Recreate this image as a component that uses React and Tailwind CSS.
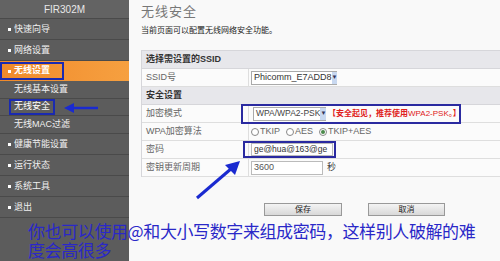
import React from "react";

const F = { fontFamily: '"Liberation Sans", "Noto Sans CJK SC", sans-serif' };

function NavItem({ children, sub }) {
  return (
    <div className={`flex items-center border-b border-[#4a4a4a] ${sub ? "h-[18px] pl-[14px]" : "h-[21px] pl-[8px]"}`}>
      {!sub && <span className="w-[3px] h-[3px] bg-white mr-[3px]" />}
      <span className="text-[9px] text-[#f0f0f0] leading-none whitespace-nowrap">{children}</span>
    </div>
  );
}

function Row({ label, children, header }) {
  if (header)
    return (
      <div className="h-[18px] flex items-center bg-[#e7e7eb] border-b border-[#d6d6da] pl-[4px]">
        <span className="text-[9px] font-bold text-[#333] whitespace-nowrap">{label}</span>
      </div>
    );
  return (
    <div className="h-[18px] flex bg-[#fbfbfb] border-b border-[#dedede]">
      <div className="w-[107px] shrink-0 flex items-center pl-[4px] border-r border-[#dedede]">
        <span className="text-[9px] text-[#666] whitespace-nowrap">{label}</span>
      </div>
      <div className="flex-1 flex items-center pl-[2px] whitespace-nowrap">{children}</div>
    </div>
  );
}

function Radio({ on, label }) {
  return (
    <span className="flex items-center mr-[6px]">
      <span className="w-[8px] h-[8px] rounded-full border border-[#888] bg-white flex items-center justify-center mr-[1px]">
        {on && <span className="w-[4px] h-[4px] rounded-full bg-[#4a8a4a]" />}
      </span>
      <span className="text-[9px] text-[#666]">{label}</span>
    </span>
  );
}

export default function App() {
  return (
    <div className="w-[500px] h-[261px] flex relative overflow-hidden bg-[#f9f9f9]" style={F}>
      {/* Sidebar */}
      <div className="w-[129px] h-full bg-[#5c5c5c] flex flex-col shrink-0">
        <div className="h-[19px] flex items-center justify-center border-b border-[#4a4a4a] bg-[#636363]">
          <span className="text-[10px] text-[#e8e8e8]">FIR302M</span>
        </div>
        <NavItem>快速向导</NavItem>
        <NavItem>网络设置</NavItem>
        <div className="h-[20px] flex items-center bg-gradient-to-r from-[#f08a2a] to-[#f6a040] relative">
          <div className="absolute left-0 top-[1px] w-[64px] h-[18px] border-[2px] border-[#1a2ab0]" />
          <span className="w-[3px] h-[3px] bg-white ml-[8px] mr-[3px]" />
          <span className="text-[9px] text-white font-bold">无线设置</span>
        </div>
        <NavItem sub>无线基本设置</NavItem>
        <div className="h-[17px] flex items-center pl-[9px] border-b border-[#4a4a4a] relative">
          <div className="border-[2px] border-[#1a2ab0] px-[3px] h-[16px] flex items-center">
            <span className="text-[9px] text-white">无线安全</span>
          </div>
          <svg className="absolute left-[64px] top-[3px]" width="36" height="12" viewBox="0 0 36 12">
            <line x1="8" y1="6" x2="34" y2="6" stroke="#1a2ad0" strokeWidth="2.5" />
            <polygon points="0,6 10,1 10,11" fill="#1a2ad0" />
          </svg>
        </div>
        <NavItem sub>无线MAC过滤</NavItem>
        <NavItem>健康节能设置</NavItem>
        <NavItem>运行状态</NavItem>
        <NavItem>系统工具</NavItem>
        <NavItem>退出</NavItem>
      </div>

      {/* Main */}
      <div className="flex-1 pl-[12px] flex flex-col">
        <div className="h-[24px] flex items-center">
          <span className="text-[13px] text-[#777] tracking-[1px]">无线安全</span>
        </div>
        <div className="h-[14px] flex items-center">
          <span className="text-[8px] text-[#222] whitespace-nowrap">当前页面可以配置无线网络安全功能。</span>
        </div>
        <div className="h-[12px]" />
        <div className="border-l border-t border-[#d6d6da]">
          <Row header label="选择需设置的SSID" />
          <Row label="SSID号">
            <div className="h-[14px] w-[86px] shrink-0 border border-[#aaa] bg-white flex items-center justify-between pl-[2px]">
              <span className="text-[9px] text-[#333]">Phicomm_E7ADD8</span>
              <span className="w-[8px] h-[12px] bg-[#c8d8f0] flex items-center justify-center text-[6px] text-[#335]">▼</span>
            </div>
          </Row>
          <Row header label="安全设置" />
          <Row label="加密模式">
            <div className="relative flex items-center -ml-[10px] h-[20px] border-[2px] border-[#2a2aa0] pl-[10px] pr-[2px] w-[220px] shrink-0">
              <div className="h-[14px] w-[73px] shrink-0 border border-[#aaa] bg-white flex items-center justify-between pl-[2px]">
                <span className="text-[8.5px] text-[#444]">WPA/WPA2-PSK</span>
                <span className="w-[8px] h-[12px] bg-[#c8d8f0] flex items-center justify-center text-[6px] text-[#335]">▼</span>
              </div>
              <span className="text-[8px] text-[#e02020] ml-[2px] font-bold">【安全起见，推荐使用<span className="font-normal">WPA2-PSK。</span>】</span>
            </div>
          </Row>
          <Row label="WPA加密算法">
            <Radio label="TKIP" />
            <Radio label="AES" />
            <Radio on label="TKIP+AES" />
          </Row>
          <Row label="密码">
            <div className="-ml-[8px] h-[17px] w-[93px] shrink-0 border-[2px] border-[#2a2aa0] flex items-center pl-[6px]">
              <div className="h-[13px] w-[82px] border border-[#bbb] bg-white flex items-center pl-[2px]">
                <span className="text-[8.5px] text-[#333]">ge@hua@163@ge</span>
              </div>
            </div>
          </Row>
          <Row label="密钥更新周期">
            <div className="h-[14px] w-[72px] border border-[#bbb] bg-white flex items-center pl-[2px]">
              <span className="text-[9px] text-[#555]">3600</span>
            </div>
            <span className="text-[9px] text-[#444] ml-[4px]">秒</span>
          </Row>
        </div>
        <div className="flex pl-[123px] gap-[26px] mt-[26px]">
          <div className="w-[78px] h-[13px] border border-[#999] bg-gradient-to-b from-[#f4f4f4] to-[#d8d8d8] flex items-center justify-center">
            <span className="text-[8px] text-[#222]">保存</span>
          </div>
          <div className="w-[77px] h-[13px] border border-[#999] bg-gradient-to-b from-[#f4f4f4] to-[#d8d8d8] flex items-center justify-center">
            <span className="text-[8px] text-[#222]">取消</span>
          </div>
        </div>
      </div>

      {/* Arrow to password */}
      <svg className="absolute left-[194px] top-[158px]" width="50" height="44" viewBox="0 0 50 44">
        <line x1="3" y1="40" x2="38" y2="10" stroke="#1a2ad0" strokeWidth="3" />
        <polygon points="46,3 31,7 41,17" fill="#1a2ad0" />
      </svg>

      {/* Annotation */}
      <div
        className="absolute left-[28px] top-[221px] text-[17px] leading-[19px] tracking-[-0.4px] text-[#2a28c8] whitespace-nowrap"
        style={{ fontFamily: '"Noto Sans CJK SC", sans-serif' }}
      >
        你也可以使用@和大小写数字来组成密码，这样别人破解的难
        <br />
        度会高很多
      </div>
    </div>
  );
}
